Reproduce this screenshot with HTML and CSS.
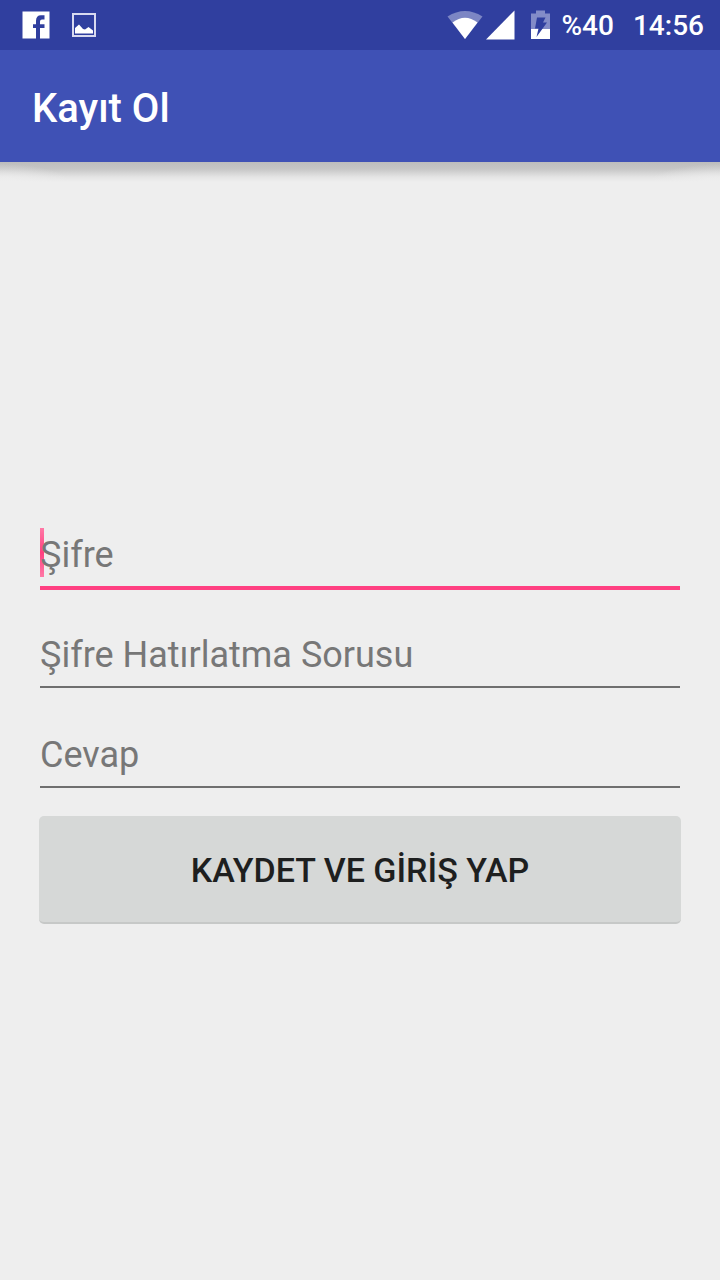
FILE: index.html
```html
<!DOCTYPE html>
<html lang="tr">
<head>
<meta charset="utf-8">
<meta name="viewport" content="width=device-width, initial-scale=1">
<title>Kayıt Ol</title>
<link rel="stylesheet" href="styles.css">
</head>
<body>
<div class="status-bar">
  <div class="notifications">
    <svg class="icon" width="28" height="28" viewBox="0 0 28 28" aria-hidden="true">
      <path fill="#fff" d="M.5.5h27v27H18V17h4.500v-3.800H18V10.500q0-2 2-2h2.500V4.300H19q-5 0-5 5.700v3.200h-3V17h3v10.500H.5z"/>
    </svg>
    <svg class="icon" width="24" height="24" viewBox="0 0 24 24" aria-hidden="true">
      <rect x="1" y="1" width="22" height="22" fill="none" stroke="#d8daf0" stroke-width="2"/>
      <path fill="#fff" d="M3 20.500v-5.500l4-3.500 4 4.500 2 .5 3.500-2.500 4.500 3.500v3z"/>
    </svg>
  </div>
  <div class="system">
    <svg class="icon" width="36" height="30" viewBox="0 0 36 30" aria-hidden="true">
      <path fill="#7c86c4" d="M.5 6.500Q18-4.500 35.500 6.500L18 29z"/>
      <path fill="#fff" d="M5.500 12.500Q18 3 30.500 12.500L18 29z"/>
    </svg>
    <svg class="icon" width="30" height="30" viewBox="0 0 30 30" aria-hidden="true">
      <path fill="#fff" d="M0 29.500 28.500.5v29z"/>
    </svg>
    <svg class="icon battery" width="20" height="30" viewBox="0 0 20 30" aria-hidden="true">
      <path fill="#838cc8" d="M0 3.500h5V.5h9v3h5V19H0z"/>
      <path fill="#fff" d="M0 19h19v10H0z"/>
      <path fill="#303f9f" d="M6 7.500h8.500l-2.500 5h4L5.500 27l2-8.500H4z"/>
    </svg>
    <span class="level">%40</span>
    <time class="clock">14:56</time>
  </div>
</div>
<header class="app-bar">
  <h1 class="title">Kayıt Ol</h1>
</header>
<main class="content">
  <form class="form">
    <div class="field focused">
      <span class="cursor"></span>
      <input class="input" type="password" placeholder="Şifre" aria-label="Şifre">
    </div>
    <div class="field">
      <input class="input" type="text" placeholder="Şifre Hatırlatma Sorusu" aria-label="Şifre Hatırlatma Sorusu">
    </div>
    <div class="field">
      <input class="input" type="text" placeholder="Cevap" aria-label="Cevap">
    </div>
    <button class="submit" type="button">KAYDET VE GİRİŞ YAP</button>
  </form>
</main>
</body>
</html>
```
FILE: styles.css
```css
* {
  box-sizing: border-box;
}

body {
  margin: 0;
  min-height: 100vh;
  display: flex;
  flex-direction: column;
  background: #eeeeee;
  font-family: Roboto, "Noto Sans", sans-serif;
}

.status-bar {
  display: flex;
  justify-content: space-between;
  align-items: center;
  height: 50px;
  padding: 0 16px 0 22px;
  background: #303f9f;
  color: #fff;
}

.notifications,
.system {
  display: flex;
  align-items: center;
}

.notifications {
  gap: 22px;
}

.icon {
  display: block;
  flex: none;
}

.system {
  gap: 3px;
  font-size: 28px;
  font-weight: 500;
  line-height: 32px;
}

.level,
.clock {
  padding-top: 2px;
}

.battery {
  margin: 0 8px 0 12px;
}

.clock {
  margin-left: 16px;
}

.app-bar {
  position: relative;
  display: flex;
  align-items: center;
  height: 112px;
  padding: 6px 32px 0;
  background: #3f51b5;
}

.app-bar::after {
  content: "";
  position: absolute;
  top: 100%;
  left: 0;
  right: 0;
  height: 20px;
  background:
    radial-gradient(ellipse 70px 18px at 0 100%, #eeeeee, #eeeeee00),
    radial-gradient(ellipse 70px 18px at 100% 100%, #eeeeee, #eeeeee00),
    linear-gradient(#bdbdbd, #c6c6c6 35%, #e4e4e4 75%, #eeeeee);
}

.title {
  margin: 0;
  color: #fff;
  font-size: 40px;
  font-weight: 500;
  line-height: 48px;
}

.content {
  flex: 1;
  display: flex;
  flex-direction: column;
  justify-content: center;
  padding: 0 40px;
}

.form {
  display: flex;
  flex-direction: column;
  gap: 28px;
}

.field {
  position: relative;
  margin-bottom: 2px;
  border-bottom: 2px solid #6f6f6f;
}

.focused {
  margin-bottom: 0;
  border-bottom: 4px solid #ff4081;
}

.input {
  position: relative;
  display: block;
  width: 100%;
  height: 68px;
  padding: 6px 0 0;
  border: 0;
  outline: 0;
  background: transparent;
  color: #212121;
  caret-color: #ff4081;
  font-family: inherit;
  font-size: 36px;
}

.input::placeholder {
  color: #777777;
  opacity: 1;
}

.cursor {
  position: absolute;
  top: 10px;
  left: 0;
  width: 4px;
  height: 49px;
  background: linear-gradient(#ff79a6, #ff4081 50%, #ff79a6);
}

.submit {
  height: 108px;
  margin: -2px -1px 0;
  padding: 2px 0 0;
  border: 0;
  border-bottom: 2px solid #c6c8c7;
  border-radius: 5px;
  background: #d6d8d7;
  color: #1e1f1f;
  font-family: inherit;
  font-size: 34px;
  font-weight: 500;
}
```
